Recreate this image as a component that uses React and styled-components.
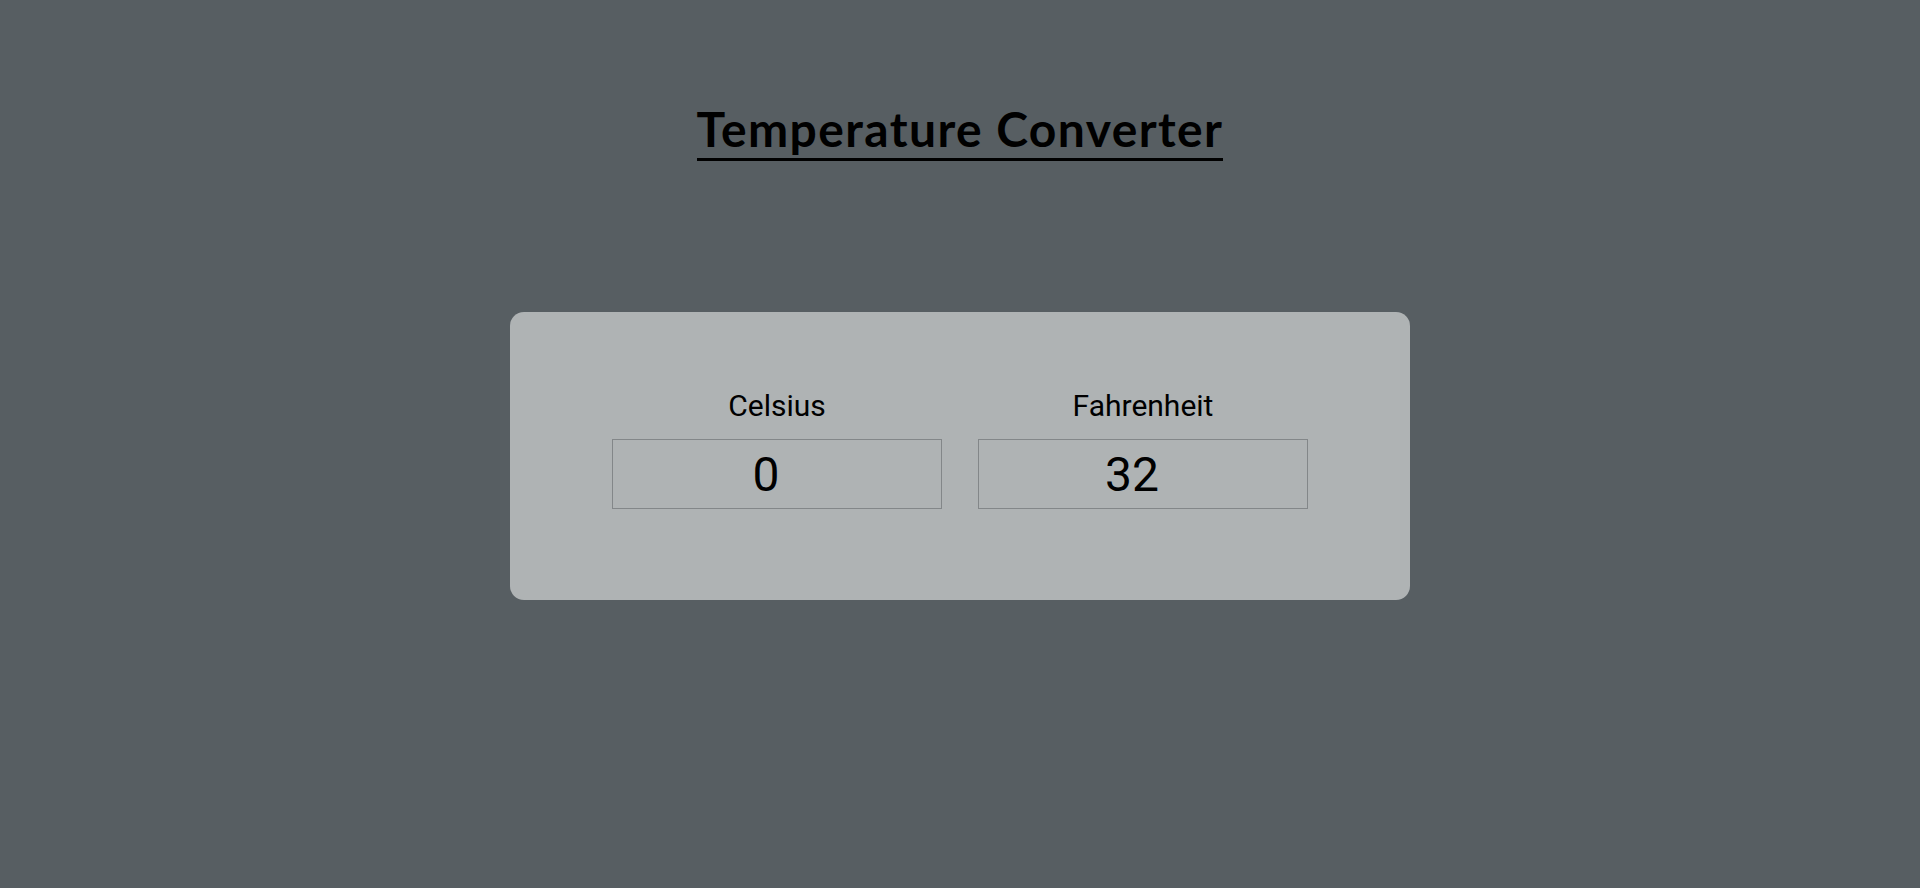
import { useState } from 'react';
import styled, { createGlobalStyle } from 'styled-components';

const GlobalStyle = createGlobalStyle`
  html, body {
    margin: 0;
    padding: 0;
    background: #575e62;
    min-height: 100%;
  }
  body {
    font-family: Roboto, "Liberation Sans", sans-serif;
  }
`;

const Page = styled.main`
  min-height: 100vh;
  display: flex;
  flex-direction: column;
  align-items: center;
`;

const Header = styled.header`
  width: 100%;
  display: flex;
  justify-content: center;
  padding-top: 100px;
`;

const Title = styled.h1`
  margin: 0;
  font-family: "Trebuchet MS", Lato, "DejaVu Sans", sans-serif;
  font-size: 48px;
  font-weight: 700;
  letter-spacing: 1.4px;
  line-height: 58px;
  color: #000;
  border-bottom: 3px solid #000;
`;

const Card = styled.section`
  margin-top: 151px;
  width: 900px;
  height: 288px;
  box-sizing: border-box;
  padding-top: 76px;
  background: #afb3b4;
  border-radius: 14px;
  display: flex;
  justify-content: center;
  gap: 36px;
`;

const Field = styled.label`
  width: 330px;
  display: flex;
  flex-direction: column;
  align-items: center;
  gap: 16px;
`;

const FieldName = styled.span`
  font-family: Roboto, sans-serif;
  font-size: 30px;
  line-height: 35px;
  color: #000;
`;

const ValueInput = styled.input`
  width: 100%;
  height: 70px;
  box-sizing: border-box;
  padding: 0 22px 0 0;
  border: 1px solid #838789;
  background: transparent;
  font-family: Roboto, sans-serif;
  font-size: 48px;
  color: #000;
  text-align: center;
  outline: none;

  &::-webkit-inner-spin-button,
  &::-webkit-outer-spin-button {
    -webkit-appearance: none;
    margin: 0;
  }
`;

export default function App() {
  const [celsius, setCelsius] = useState('0');
  const fahrenheit = celsius === '' ? '' : String(Math.round((Number(celsius) * 9) / 5 + 32));

  return (
    <>
      <GlobalStyle />
      <Page>
        <Header>
          <Title>Temperature Converter</Title>
        </Header>
        <Card>
          <Field>
            <FieldName>Celsius</FieldName>
            <ValueInput
              type="number"
              value={celsius}
              onChange={(e) => setCelsius(e.target.value)}
            />
          </Field>
          <Field>
            <FieldName>Fahrenheit</FieldName>
            <ValueInput
              type="number"
              value={fahrenheit}
              onChange={(e) =>
                setCelsius(
                  e.target.value === ''
                    ? ''
                    : String(Math.round(((Number(e.target.value) - 32) * 5) / 9))
                )
              }
            />
          </Field>
        </Card>
      </Page>
    </>
  );
}
